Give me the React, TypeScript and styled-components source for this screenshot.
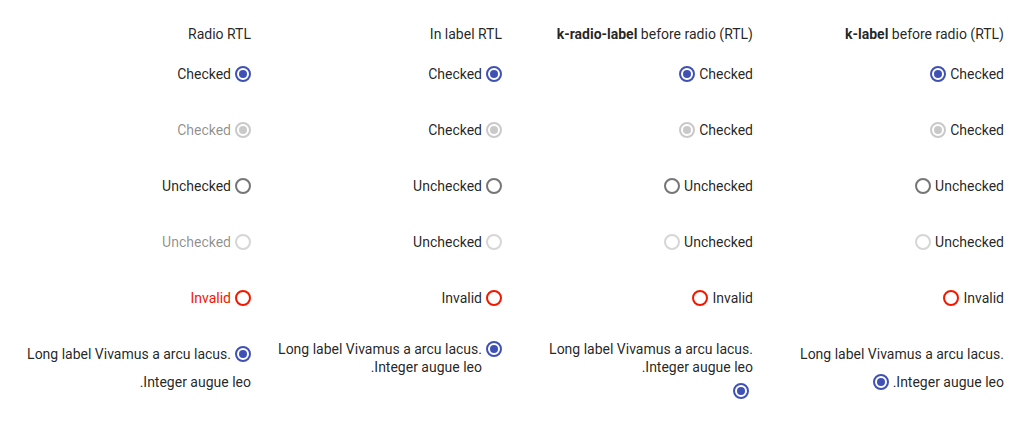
import React from "react";
import styled, { createGlobalStyle, css } from "styled-components";

const Global = createGlobalStyle`
  html, body { margin: 0; padding: 0; background: #ffffff; }
  body {
    font-family: Roboto, "Noto Sans", "Liberation Sans", sans-serif;
    font-size: 14px;
    color: rgba(0, 0, 0, 0.87);
  }
`;

type State = "checked" | "checkedDisabled" | "unchecked" | "uncheckedDisabled" | "invalid";

const PRIMARY = "#3f51b5";
const RED = "#f31700";

const borderFor = (s: State) => {
  switch (s) {
    case "checked":
      return PRIMARY;
    case "checkedDisabled":
      return "#c9c9c9";
    case "unchecked":
      return "#757575";
    case "uncheckedDisabled":
      return "#d6d6d6";
    case "invalid":
      return RED;
  }
};

const Radio = styled.span<{ $state: State; $mode: "inline" | "flex" }>`
  box-sizing: border-box;
  width: 16px;
  height: 16px;
  flex: 0 0 16px;
  border-radius: 50%;
  border: 2px solid ${(p) => borderFor(p.$state)};
  background: #ffffff;
  position: relative;
  display: inline-block;
  ${(p) =>
    p.$mode === "inline" &&
    css`
      vertical-align: -3px;
    `}
  ${(p) =>
    (p.$state === "checked" || p.$state === "checkedDisabled") &&
    css`
      &::before {
        content: "";
        position: absolute;
        left: 2px;
        top: 2px;
        width: 8px;
        height: 8px;
        border-radius: 50%;
        background: ${p.$state === "checked" ? PRIMARY : "#c9c9c9"};
      }
    `}
`;

const Page = styled.div`
  display: grid;
  grid-template-columns: repeat(4, 251px);
  width: 1004px;
`;

const Column = styled.div`
  display: flex;
  flex-direction: column;
  align-items: stretch;
  text-align: right;
  direction: rtl;
  padding-left: 20px;
`;

const Header = styled.div`
  height: 20px;
  line-height: 20px;
  margin: 24px 0 16px -20px;
  white-space: nowrap;
  b {
    font-weight: 700;
  }
`;

const Cell = styled.div`
  min-height: 28px;
  line-height: 28px;
  & + & {
    margin-top: 28px;
  }
`;

const FlexCell = styled(Cell)`
  display: flex;
  align-items: center;
  justify-content: flex-start;
`;

const Text = styled.span<{ $tone?: "normal" | "muted" | "error" }>`
  color: ${(p) =>
    p.$tone === "muted" ? "rgba(0, 0, 0, 0.46)" : p.$tone === "error" ? RED : "rgba(0, 0, 0, 0.87)"};
`;

const Gap = styled.span`
  display: inline-block;
  width: 4px;
`;

/* Column 2: radio inside label */
const InLabel = styled.label`
  display: inline-flex;
  align-items: flex-start;
  gap: 4px;
  line-height: 18px;
  ${Radio} {
    margin-top: 1px;
  }
`;

/* Column 3: label before radio */
const BeforeRow = styled.div`
  display: inline-flex;
  align-items: center;
  gap: 4px;
`;
const BeforeStack = styled.div`
  display: flex;
  flex-direction: column;
  align-items: flex-start;
  line-height: 18px;
  ${Radio} {
    margin-top: 7px;
    margin-inline-start: 4px;
  }
`;

type Row = { state: State; label: string };

const rows: Row[] = [
  { state: "checked", label: "Checked" },
  { state: "checkedDisabled", label: "Checked" },
  { state: "unchecked", label: "Unchecked" },
  { state: "uncheckedDisabled", label: "Unchecked" },
  { state: "invalid", label: "Invalid" },
];

const LONG = "Long label Vivamus a arcu lacus. Integer augue leo.";

const toneFor = (s: State): "normal" | "muted" | "error" =>
  s === "checkedDisabled" || s === "uncheckedDisabled" ? "muted" : s === "invalid" ? "error" : "normal";

export default function App() {
  return (
    <>
      <Global />
      <Page>
        <Column dir="rtl">
          <Header>Radio RTL</Header>
          {rows.map((r, i) => (
            <Cell key={i}>
              <Radio $state={r.state} $mode="inline" />
              <Gap />
              <Text $tone={toneFor(r.state)}>{r.label}</Text>
            </Cell>
          ))}
          <Cell>
            <Radio $state="checked" $mode="inline" />
            <Gap />
            <Text>{LONG}</Text>
          </Cell>
        </Column>

        <Column dir="rtl">
          <Header>In label RTL</Header>
          {rows.map((r, i) => (
            <FlexCell key={i}>
              <InLabel>
                <Radio $state={r.state} $mode="flex" />
                <Text>{r.label}</Text>
              </InLabel>
            </FlexCell>
          ))}
          <FlexCell>
            <InLabel>
              <Radio $state="checked" $mode="flex" />
              <Text>{LONG}</Text>
            </InLabel>
          </FlexCell>
        </Column>

        <Column dir="rtl">
          <Header>
            <b>k-radio-label</b> before radio (RTL)
          </Header>
          {rows.map((r, i) => (
            <FlexCell key={i}>
              <BeforeRow>
                <Text>{r.label}</Text>
                <Radio $state={r.state} $mode="flex" />
              </BeforeRow>
            </FlexCell>
          ))}
          <Cell>
            <BeforeStack>
              <Text>{LONG}</Text>
              <Radio $state="checked" $mode="flex" />
            </BeforeStack>
          </Cell>
        </Column>

        <Column dir="rtl">
          <Header>
            <b>k-label</b> before radio (RTL)
          </Header>
          {rows.map((r, i) => (
            <Cell key={i}>
              <Text>{r.label}</Text>
              <Gap />
              <Radio $state={r.state} $mode="inline" />
            </Cell>
          ))}
          <Cell>
            <Text>{LONG}</Text>
            <Gap />
            <Radio $state="checked" $mode="inline" />
          </Cell>
        </Column>
      </Page>
    </>
  );
}
